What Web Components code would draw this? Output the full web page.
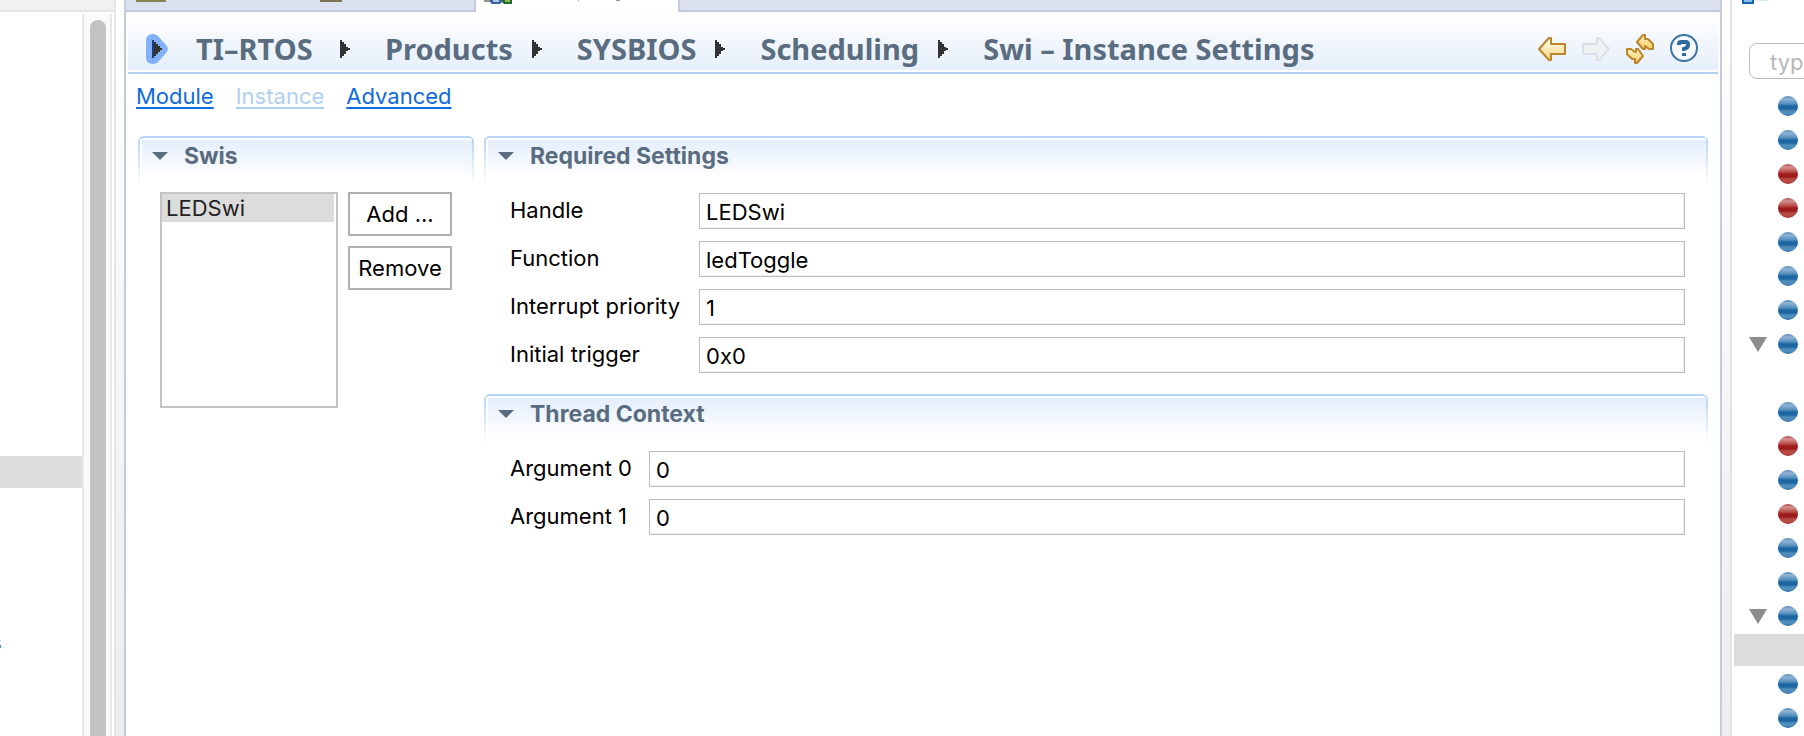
<!DOCTYPE html>
<html lang="en">
<head>
<meta charset="utf-8">
<title>TI-RTOS configuration</title>
<style>
html, body { height: 100%; }
body { margin: 0; overflow: hidden; background: #fff; color: #000; font: 22px/28px Inter, "Liberation Sans", sans-serif; }
</style>
</head>
<body>
<ide-shell>
  <project-tree slot="left"></project-tree>
  <config-editor slot="main">
    <form-header slot="header"></form-header>
    <page-links slot="links"></page-links>
    <form-section slot="side" label="Swis"><instance-list></instance-list></form-section>
    <form-section label="Required Settings" style="--label-width: 189px">
      <form-field label="Handle" value="LEDSwi"></form-field>
      <form-field label="Function" value="ledToggle"></form-field>
      <form-field label="Interrupt priority" value="1"></form-field>
      <form-field label="Initial trigger" value="0x0"></form-field>
    </form-section>
    <form-section label="Thread Context" style="--label-width: 139px">
      <form-field label="Argument 0" value="0"></form-field>
      <form-field label="Argument 1" value="0"></form-field>
    </form-section>
  </config-editor>
  <outline-view slot="right"></outline-view>
</ide-shell>
<script>
const define = (name, render) => customElements.define(name, class extends HTMLElement {
  connectedCallback() {
    if (this.shadowRoot) return;
    this.attachShadow({ mode: 'open' }).innerHTML =
      '<style>*{box-sizing:border-box}</style>' + render(this);
  }
});

define('ide-shell', () => `
<style>
:host { display: grid; grid-template-columns: 116px 8px minmax(0, 1fr) 8px 74px; height: 100vh; }
.sash { background: linear-gradient(#fff, #ededed); }
::slotted(*) { min-width: 0; min-height: 0; }
</style>
<slot name="left"></slot><div class="sash"></div><slot name="main"></slot><div class="sash"></div><slot name="right"></slot>`);

define('project-tree', () => `
<style>
:host { display: flex; flex-direction: column; border-right: 2px solid #e5e5e5; background: #fff; }
header { flex: none; height: 12px; background: #f1f1f1; border-bottom: 2px solid #e4e4e4; }
.body { flex: 1; display: flex; min-height: 0; padding: 1px 2px 0 0; }
ul { flex: 1; margin: 0; padding: 0; list-style: none; display: grid; grid-auto-rows: 34px; align-items: center; overflow: hidden; }
.selected { grid-row: 14; height: 32px; background: #dcdcdc; }
.clipped { grid-row: 19; margin-left: -10px; }
.track { width: 30px; margin-top: 1px; padding: 6px 4px 0 6px; background: #fafafa; border: solid #e8e8e8; border-width: 0 2px; }
.thumb { height: 100%; border-radius: 8px 8px 0 0; background: #c2c2c2; }
</style>
<header></header>
<div class="body">
  <ul><li class="selected"></li><li class="clipped">s</li></ul>
  <div class="track"><div class="thumb"></div></div>
</div>`);

define('config-editor', () => `
<style>
:host { display: flex; flex-direction: column; border: solid #c5cbdd; border-width: 0 2px; background: #fff; }
.tabs { flex: none; display: flex; height: 12px; }
.tab, .rest { background: #dbe0ee; border-bottom: 2px solid #c5cbdd; }
.tab { width: 350px; border-right: 2px solid #c5cbdd; }
.active { width: 202px; }
.rest { flex: 1; border-left: 2px solid #c5cbdd; }
svg { display: block; }
.columns { display: grid; grid-template-columns: 336px minmax(0, 1fr); gap: 10px; align-items: start; padding: 24px 12px 0; }
.stack { display: grid; gap: 21px; }
</style>
<div class="tabs">
  <div class="tab"><svg width="230" height="4"><path fill="#8a8356" d="M10 0h30v2H10z"/><path fill="#7f7553" d="M194 0h22v2h-22z"/></svg></div>
  <div class="active"><svg width="160" height="5"><path fill="#98948c" d="M8 0h8v2H8z"/><path fill="#3d62a0" d="M14 0h12v2l-2 2h-8l-2-2z"/><path fill="#a9c8e8" d="M17 0h6v2h-6z"/><path fill="#1c6a2c" d="M26 0h10v4h-8l-2-2z"/><path fill="#8dbb4a" d="M29 0h5v2h-5z"/><path fill="#999" d="M102 0h1v1h-1zM140 0h4v1h-4z"/></svg></div>
  <div class="rest"></div>
</div>
<slot name="header"></slot>
<slot name="links"></slot>
<div class="columns"><slot name="side"></slot><div class="stack"><slot></slot></div></div>`);

define('form-header', () => `
<style>
:host { display: flex; align-items: center; height: 62px; margin: 0 2px; padding: 12px 20px 0 18px; box-sizing: border-box; background: linear-gradient(#fff, #e6effb 58px, #fff 58px, #fff 60px, #b0d1f3 60px); }
svg { display: block; }
nav { flex: 1; min-width: 0; }
ol { display: flex; align-items: center; margin: 0; padding: 0; list-style: none; }
li { display: flex; align-items: center; white-space: nowrap; font: bold 29px/40px "Noto Sans", "Open Sans", sans-serif; color: #5a6c80; }
.root span { min-width: 125px; }
.menu, .sep, .tool { padding: 0; border: 0; background: none; }
.menu { margin: 0 28px 0 0; }
.sep { margin: 0 35px 0 19px; }
.tools { display: flex; gap: 16px; }
.tool { width: 28px; height: 30px; }
</style>
<nav aria-label="Configuration path"><ol>
  <li class="root"><button class="menu" aria-label="Open menu"><svg width="22" height="30"><path fill="#82b1f8" d="M0 7Q0 0 7 0Q10 0 12 2L20 11Q24 15 20 19L12 28Q10 30 7 30Q0 30 0 23z"/><path fill="#1f3f7a" d="M6 6h2v18H6z"/><path fill="#333" d="M8 8h2v2h2v2h2v2h2v2h-2v2h-2v2h-2v2H8z"/></svg></button><span>TI–RTOS</span></li>
  ${['Products', 'SYSBIOS', 'Scheduling', 'Swi – Instance Settings'].map(t => `<li><button class="sep" aria-label="Show children"><svg width="10" height="18"><path fill="#333" d="M0 0h2v2h2v2h2v3h2v1h2v2H8v1H6v3H4v2H2v2H0z"/></svg></button><span>${t}</span></li>`).join('')}
</ol></nav>
<div class="tools">
  <button class="tool" aria-label="Back"><svg width="28" height="30"><defs><linearGradient id="g" x2="0" y2="1"><stop stop-color="#fffdf2"/><stop offset="1" stop-color="#f8d67c"/></linearGradient></defs><path fill="url(#g)" stroke="#bd8429" stroke-width="2" stroke-linejoin="round" d="M1 15L11 4h2v6h14v10H13v6h-2z"/></svg></button>
  <button class="tool" aria-label="Forward"><svg width="28" height="30"><path fill="#eff1f3" stroke="#dcdfe4" stroke-width="2" stroke-linejoin="round" d="M27 15L17 4h-2v6H1v10h14v6h2z"/></svg></button>
  <button class="tool" aria-label="Refresh"><svg width="28" height="30"><defs><linearGradient id="h" x2="0" y2="1"><stop stop-color="#fff4c4"/><stop offset="1" stop-color="#f5cc62"/></linearGradient></defs><g fill="url(#h)" stroke="#bd8429" stroke-width="2" stroke-linejoin="round"><path d="M11 8L17 1h2v4h3l5 5v5h-4l-4-3v3h-2z"/><path d="M17 22L11 29H9v-4H6l-5-5v-5h4l4 3h1v-3h2z"/></g></svg></button>
  <button class="tool" aria-label="Help"><svg width="28" height="30"><circle cx="14" cy="14" r="13" fill="#f5f9fe" stroke="#3d75a6" stroke-width="2"/><path fill="none" stroke="#2f6a9e" stroke-width="4" d="M9 11V10q0-2 2-2h5q2 0 2 3t-4 4v2"/><path fill="#2f6a9e" d="M12 19h4v3h-4z"/></svg></button>
</div>`);

define('page-links', () => `
<style>
:host { display: flex; gap: 22px; margin-top: 6px; padding: 0 10px; line-height: 32px; }
a { color: #0f6bdc; text-decoration: underline 2px; text-underline-offset: 3px; text-decoration-skip-ink: none; }
.current { color: #b0d0f2; }
</style>
<a href="#module">Module</a><a class="current" href="#instance" aria-current="page">Instance</a><a href="#advanced">Advanced</a>`);

define('form-section', el => `
<style>
:host { display: block; }
h2 { position: relative; margin: 0; height: 50px; border-top: 2px solid #b5d4f6; border-radius: 6px 6px 0 0; background: linear-gradient(#b5d4f6, #fff) left / 2px 100% no-repeat, linear-gradient(#b5d4f6, #fff) right / 2px 100% no-repeat, linear-gradient(#fff, #fff) 2px 0 / 2px 100% no-repeat, linear-gradient(#fff 2px, #e4eefb 2px, #fff 40px); }
button { display: flex; align-items: center; gap: 16px; width: 100%; padding: 3px 14px; border: 0; background: none; color: #5a6c80; font: bold 23px/30px Inter, sans-serif; }
.body { display: grid; gap: 12px; padding: 7px 23px 0 26px; }
:host([slot=side]) .body { padding: 6px 22px 0; }
</style>
<h2><button aria-expanded="true"><svg width="16" height="8"><path fill="#5a6c80" d="M0 0h16L8 8z"/></svg>${el.getAttribute('label')}</button></h2>
<div class="body"><slot></slot></div>`);

define('form-field', el => `
<style>
:host { display: grid; grid-template-columns: var(--label-width) minmax(0, 1fr); align-items: center; }
label { line-height: 34px; padding-bottom: 2px; white-space: nowrap; }
input { width: 100%; height: 36px; margin: 0; padding: 1px 6px 0; border: 1px solid #bdbdbd; border-radius: 0; box-shadow: inset -1px -1px #efefef; background: #fff; color: #000; font: inherit; outline: 0; }
</style>
<label for="field">${el.getAttribute('label')}</label><input id="field" type="text" value="${el.getAttribute('value')}">`);

define('instance-list', () => `
<style>
:host { display: flex; gap: 10px; align-items: flex-start; }
select { width: 178px; height: 216px; margin: 0; padding: 0 2px 0 0; border: 2px solid #c4c4c4; border-radius: 0; background: #fff; font: inherit; outline: 0; overflow: hidden; }
option { padding: 1px 4px 0; min-height: 28px; line-height: 28px; color: #222; }
option:checked { color: #222; background: linear-gradient(#dcdcdc, #dcdcdc); }
.actions { display: grid; gap: 10px; width: 104px; }
button { height: 44px; padding: 0; border: 2px solid #b0b0b0; background: #fff; color: #000; font: inherit; }
</style>
<select size="7" aria-label="Swis"><option selected>LEDSwi</option></select>
<div class="actions"><button>Add ...</button><button>Remove</button></div>`);

const outline = ['b', 'b', 'r', 'r', 'b', 'b', 'b', 'b open', '', 'b', 'r', 'b', 'r', 'b', 'b', 'b open', 'selected', 'b', 'b'];
const ball = ([rim, light, dark, low]) => `<svg width="20" height="20"><defs><linearGradient id="s" x2="0" y2="1"><stop stop-color="${rim}"/><stop offset=".15" stop-color="${light}"/><stop offset=".4" stop-color="${low}"/><stop offset=".5" stop-color="${dark}"/><stop offset=".65" stop-color="${dark}"/><stop offset=".75" stop-color="${low}"/><stop offset=".9" stop-color="${low}"/><stop offset="1" stop-color="${dark}"/></linearGradient></defs><circle cx="10" cy="10" r="10" fill="url(#s)"/></svg>`;
const blue = ball(['#4682b4', '#93b5d4', '#1d66a2', '#4f8dbd']);
const red = ball(['#b04444', '#d49490', '#9c1c1c', '#b84a46']).replaceAll('"s"', '"r"').replace('#s', '#r');

define('outline-view', () => `
<style>
:host { display: flex; flex-direction: column; border-left: 2px solid #e3e3e3; background: #fff; overflow: hidden; }
svg { display: block; flex: none; }
.search { flex: none; width: 240px; height: 36px; margin: 39px 0 10px 17px; padding: 2px 20px 0; border: 1px solid #bbb; border-radius: 8px; background: #fff; font: inherit; outline: 0; }
.search::placeholder { color: #b8b8b8; opacity: 1; }
ul { margin: 0; padding: 0; list-style: none; display: grid; grid-auto-rows: 34px; align-items: center; }
li { display: flex; align-items: center; padding-left: 17px; gap: 11px; height: 32px; }
.twisty { width: 18px; height: 15px; }
.selected { margin-left: 2px; background: #dcdcdc; }
</style>
<svg width="60" height="4"><path fill="#1a66ad" d="M10 0h12v4H10z"/><path fill="#8cbdf0" d="M12 0h8v2h-8z"/><path fill="#dde8f5" d="M24 0h12v1H24z"/></svg>
<input class="search" type="text" placeholder="typ" aria-label="Filter">
<ul>${outline.map(k => k === '' || k === 'selected' ? `<li class="${k}"></li>` :
  `<li><svg class="twisty">${k.includes('open') ? '<path fill="#8c8c8c" d="M0 0h18L9 15z"/>' : ''}</svg>${k[0] === 'b' ? blue : red}</li>`).join('')}</ul>`);
</script>
</body>
</html>
